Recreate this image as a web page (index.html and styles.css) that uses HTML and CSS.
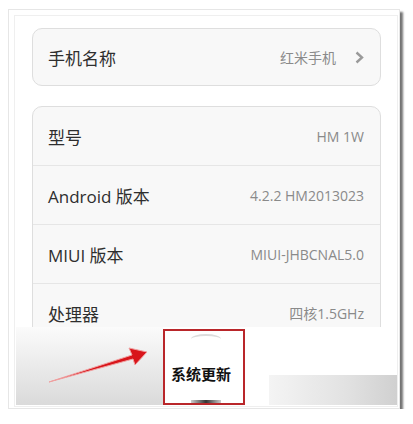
FILE: index.html
```html
<!DOCTYPE html>
<html lang="zh-CN">

<head>
    <meta charset="UTF-8">
    <meta name="viewport" content="width=device-width, initial-scale=1.0">
    <title>关于手机</title>
    <link rel="stylesheet" href="styles.css">
</head>

<body>
    <div class="frame">
        <div class="screen">
            <div class="list-area">
                <div class="card">
                    <div class="row">
                        <span class="label">手机名称</span>
                        <span class="value">红米手机
                            <svg class="chevron" width="9" height="13" viewBox="0 0 9 13">
                                <path d="M1.5 1.5 L7 6.5 L1.5 11.5" fill="none" stroke="#9a9a9a" stroke-width="2.4" />
                            </svg>
                        </span>
                    </div>
                </div>

                <div class="card card-info">
                    <div class="row">
                        <span class="label">型号</span>
                        <span class="value">HM 1W</span>
                    </div>
                    <div class="row">
                        <span class="label">Android 版本</span>
                        <span class="value">4.2.2 HM2013023</span>
                    </div>
                    <div class="row">
                        <span class="label">MIUI 版本</span>
                        <span class="value">MIUI-JHBCNAL5.0</span>
                    </div>
                    <div class="row">
                        <span class="label">处理器</span>
                        <span class="value">四核1.5GHz</span>
                    </div>
                </div>
            </div>

            <div class="bottom-bar">
                <div class="bar-left">
                    <!-- red annotation arrow -->
                    <svg class="arrow" width="147" height="78" viewBox="0 0 147 78">
                        <path d="M33 55 L116 28 L113 21 L131 25 L119 38 L117 32 Z" fill="#d8151b" stroke="#f0a0a0" stroke-width="1" stroke-linejoin="round" />
                    </svg>
                </div>
                <div class="update-box">
                    <span class="update-icon"></span>
                    <span class="update-text">系统更新</span>
                    <span class="update-smear"></span>
                </div>
                <div class="bar-right">
                    <div class="blur-block"></div>
                </div>
            </div>
        </div>
    </div>
</body>

</html>
```

FILE: styles.css
```css
body {
    margin: 0;
    background: #fff;
    font-family: "Open Sans", "Noto Sans CJK SC", sans-serif;
}

.frame {
    width: 392px;
    height: 400px;
    margin: 9px 0 0 8px;
    padding: 5px 1px 1px 5px;
    box-sizing: border-box;
    border: 1px solid #e6e6e6;
    background: #fff;
    box-shadow: 3px 3px 2px rgba(0, 0, 0, 0.55);
}

.screen {
    height: 100%;
    box-sizing: border-box;
    border: 1px solid #efefef;
    display: flex;
    flex-direction: column;
    overflow: hidden;
}

.list-area {
    flex: 1;
    overflow: hidden;
    padding: 12px 16px 0 17px;
}

.card {
    background: #f8f8f8;
    border: 1px solid #dedede;
    border-radius: 10px;
}

.card-info {
    margin-top: 20px;
}

.row {
    height: 56px;
    padding: 0 16px 0 15px;
    display: flex;
    align-items: center;
    justify-content: space-between;
}

.card-info .row {
    height: 58px;
    border-top: 1px solid #e6e6e6;
}

.card-info .row:first-child {
    border-top: none;
}

.label {
    font-size: 17px;
    color: #2e2e2e;
}

.value {
    font-size: 14px;
    color: #8a8a8a;
    display: flex;
    align-items: center;
}

.chevron {
    margin-left: 19px;
}

.bottom-bar {
    height: 78px;
    margin: 0 0 1px 1px;
    display: flex;
    flex-shrink: 0;
}

.bar-left {
    width: 147px;
    background: linear-gradient(to bottom, #fbfbfb, #dadada);
}

.arrow {
    display: block;
}

.update-box {
    width: 78px;
    margin-top: 2px;
    border: 2px solid #b9262a;
    background: #fff;
    display: flex;
    flex-direction: column;
    align-items: flex-start;
    padding-left: 6px;
    box-sizing: border-box;
    width: 82px;
    position: relative;
}

.update-icon {
    width: 30px;
    height: 8px;
    margin: 3px 0 0 20px;
    border-top: 2px solid #dcdcdc;
    border-radius: 50% 50% 0 0;
}

.update-text {
    margin-top: 19px;
    font-family: "Noto Sans CJK SC", sans-serif;
    font-size: 15px;
    font-weight: bold;
    color: #111;
}

.update-smear {
    position: absolute;
    bottom: 0;
    left: 26px;
    width: 30px;
    height: 3px;
    background: linear-gradient(to right, #ccc, #333, #ccc);
}

.bar-right {
    flex: 1;
    background: #fff;
    display: flex;
    align-items: flex-end;
}

.blur-block {
    width: 100%;
    height: 30px;
    margin-left: 24px;
    background: linear-gradient(to right, #f4f4f4, #e2e2e2 60%, #d0d0d0);
}
```
